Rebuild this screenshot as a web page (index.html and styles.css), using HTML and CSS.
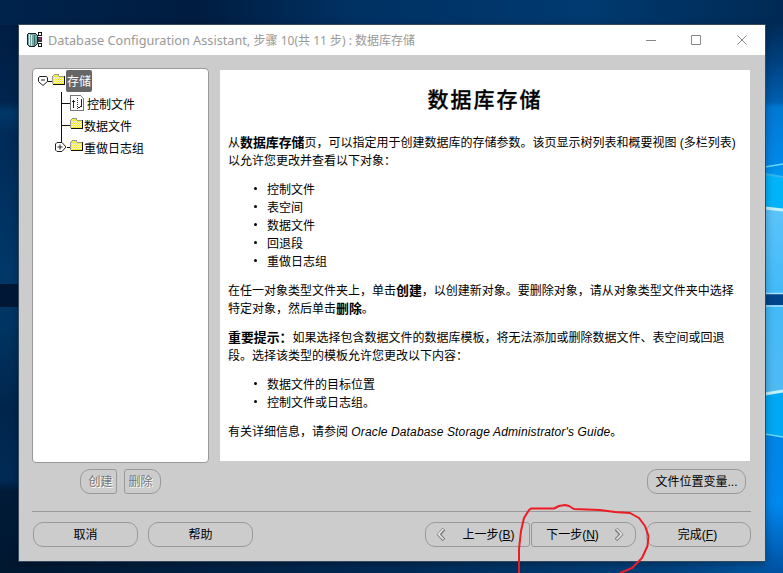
FILE: index.html
```html
<!DOCTYPE html>
<html lang="zh-CN">
<head>
<meta charset="utf-8">
<title>Database Configuration Assistant</title>
<link rel="stylesheet" href="styles.css">
</head>
<body>
<svg class="wallpaper" width="783" height="573" viewBox="0 0 783 573">
  <defs>
    <linearGradient id="top" x1="0" x2="1" y1="0" y2="0"><stop offset="0" stop-color="#00234c"/><stop offset=".25" stop-color="#001c40"/><stop offset=".45" stop-color="#003163"/><stop offset=".75" stop-color="#003a70"/><stop offset=".9" stop-color="#00305f"/><stop offset="1" stop-color="#002a55"/></linearGradient>
    <linearGradient id="left" x1="0" x2="0" y1="0" y2="1"><stop offset="0" stop-color="#001d42"/><stop offset=".14" stop-color="#00254f"/><stop offset=".16" stop-color="#00386a"/><stop offset=".2" stop-color="#002a57"/><stop offset=".45" stop-color="#003869"/><stop offset=".55" stop-color="#003462"/><stop offset=".7" stop-color="#00254c"/><stop offset=".83" stop-color="#002a55"/><stop offset=".85" stop-color="#001b38"/><stop offset="1" stop-color="#001730"/></linearGradient>
    <linearGradient id="right" x1="0" x2="0" y1="0" y2="1"><stop offset="0" stop-color="#002b58"/><stop offset=".06" stop-color="#003f7c"/><stop offset=".14" stop-color="#005fb0"/><stop offset=".15" stop-color="#0078d2"/><stop offset=".25" stop-color="#0088e8"/><stop offset=".27" stop-color="#0096f0"/></linearGradient>
    <linearGradient id="pane" x1="0" x2="0" y1="0" y2="1"><stop offset="0" stop-color="#5cc4fa"/><stop offset=".45" stop-color="#42baf8"/><stop offset="1" stop-color="#50baf4"/></linearGradient>
    <linearGradient id="low" x1="0" x2="0" y1="0" y2="1"><stop offset="0" stop-color="#0084e4"/><stop offset=".5" stop-color="#0088ee"/><stop offset="1" stop-color="#0050a0"/></linearGradient>
    <linearGradient id="bottom" x1="0" x2="1" y1="0" y2="0"><stop offset="0" stop-color="#001730"/><stop offset=".5" stop-color="#002a55"/><stop offset=".85" stop-color="#00427e"/><stop offset="1" stop-color="#0058a6"/></linearGradient>
  </defs>
  <rect width="783" height="26" fill="url(#top)"/>
  <rect y="25" width="19" height="548" fill="url(#left)"/>
  <rect x="765" y="25" width="18" height="548" fill="url(#right)"/>
  <rect y="561" width="783" height="12" fill="url(#bottom)"/>
  <rect y="284" width="19" height="23" fill="#001836"/>
  <path d="M765 174L783 177V210L765 208Z" fill="#00b4fa"/>
  <path d="M765 208L783 210V392L765 394Z" fill="url(#pane)"/>
  <path d="M765 394L783 391V438L765 434Z" fill="#00a8f4"/>
  <path d="M765 434L783 437V573H765Z" fill="url(#low)"/>
  <path d="M765 167L783 164M765 434L783 437" stroke="#6ad8f8" stroke-width="1.500" fill="none"/>
  <path d="M765 174L783 177" stroke="#35b4ee" stroke-width="2"/>
  <path d="M765 208L783 210M765 394L783 391" stroke="#c4f2f8" stroke-width="3"/>
  <rect x="765" y="294" width="18" height="11" fill="#00458a"/>
  <path d="M765 293.500H783M765 306H783" stroke="#a8e2fc" stroke-width="1.500"/>
</svg>
<main class="window">
  <header class="titlebar">
    <svg class="app-icon" width="18" height="18" viewBox="0 0 18 18" shape-rendering="crispEdges">
      <path d="M1 4L3 2H9L11 4V13L9 15H3L1 13Z" fill="#78a8a4" stroke="#222"/>
      <path d="M3.500 3V14M5.500 4V15" stroke="#d5e8e6"/><path d="M8.500 4V15" stroke="#3e6c69"/>
      <path d="M12.500 1.500H15.500V4.500H12.500ZM12.500 12.500H15.500V15.500H12.500Z" fill="#fff" stroke="#111"/>
      <path d="M12 6H16V11H12Z" fill="#333"/><path d="M13 7H15V9H13Z" fill="#a0389a"/>
    </svg>
    <h1 class="title">Database Configuration Assistant, <span class="title-cn">步骤 10(共 11 步) : 数据库存储</span></h1>
    <svg class="controls" width="104" height="14" viewBox="0 0 104 14" fill="none" stroke="#888"><path d="M0 7.500H10M45.500 2.500H54.500V11.500H45.500Z"/><path d="M91.500 2.500L100.500 11.500M100.500 2.500L91.500 11.500"/></svg>
  </header>
  <section class="workspace">
    <nav class="tree">
      <svg class="tree-lines" width="60" height="90" viewBox="0 0 60 90" fill="none" stroke="#111" shape-rendering="crispEdges"><path d="M14 12.500H20M28.500 23V74M29 34.500H37M29 56.500H37M34 78.500H37"/></svg>
      <div class="node root">
        <svg width="10" height="12" viewBox="0 0 10 12" fill="#fff" stroke="#222"><path d="M1.500 1.500H8.500L9.500 3V6.500L5 10.500L.5 6.500V3ZM3 5H7"/></svg>
        <svg class="folder" width="14" height="12"><use href="#folder"/></svg>
        <span class="selected">存储</span>
      </div>
      <div class="node child control">
        <svg width="15" height="16" viewBox="0 0 15 16" shape-rendering="crispEdges" fill="none" stroke="#222"><path d="M.5 .5H10.500L13.500 3.500V15.500H.5Z" fill="#fff" stroke="#777"/><path d="M3.500 5V13M2 6.500H5M11.500 4V11M8 12.500H10M10 11.500H12"/><path d="M7.500 3V14" stroke="#22c" stroke-dasharray="1 1"/></svg>
        <span>控制文件</span>
      </div>
      <div class="node child"><svg class="folder" width="14" height="12"><use href="#folder"/></svg><span>数据文件</span></div>
      <div class="node child redo"><svg class="expander" width="12" height="12" viewBox="0 0 12 12" fill="#fff" stroke="#222"><path d="M2 1.500H7L11 6L7 10.500H2L.5 9V3ZM2.500 6H7.500M5 3.500V8.500"/></svg><svg class="folder" width="14" height="12"><use href="#folder"/></svg><span>重做日志组</span></div>
    </nav>
    <article class="help">
      <h2>数据库存储</h2>
      <p>从<b>数据库存储</b>页，可以指定用于创建数据库的存储参数。该页显示树列表和概要视图 (多栏列表)<br>以允许您更改并查看以下对象：</p>
      <ul><li>控制文件</li><li>表空间</li><li>数据文件</li><li>回退段</li><li>重做日志组</li></ul>
      <p>在任一对象类型文件夹上，单击<b>创建</b>，以创建新对象。要删除对象，请从对象类型文件夹中选择<br>特定对象，然后单击<b>删除</b>。</p>
      <p><b>重要提示：</b>如果选择包含数据文件的数据库模板，将无法添加或删除数据文件、表空间或回退<br>段。选择该类型的模板允许您更改以下内容：</p>
      <ul><li>数据文件的目标位置</li><li>控制文件或日志组。</li></ul>
      <p>有关详细信息，请参阅 <i>Oracle Database Storage Administrator's Guide</i>。</p>
    </article>
  </section>
  <div class="actions">
    <button class="btn small join-left" disabled>创建</button>
    <button class="btn small join-right" disabled>删除</button>
    <button class="btn files">文件位置变量...</button>
  </div>
  <footer class="footer">
    <button class="btn wide">取消</button>
    <button class="btn wide help-btn">帮助</button>
    <button class="btn wide join-left back"><svg width="10" height="13" viewBox="0 0 10 13"><use href="#chevron"/></svg><span>上一步(<u>B</u>)</span></button>
    <button class="btn wide join-right next"><span>下一步(<u>N</u>)</span><svg class="flip" width="10" height="13" viewBox="0 0 10 13"><use href="#chevron"/></svg></button>
    <button class="btn wide finish"><span>完成(<u>F</u>)</span></button>
  </footer>
</main>
<svg class="annotation" width="140" height="73" viewBox="0 0 140 73" fill="none" stroke="#ed1c24" stroke-width="2" stroke-linejoin="round"><path d="M9 73V49L11 31L14 18L19 10L21 8.500H44L49 6L55 5L59 6L64 9L90 10L105 12L120 13L129 18L135 26L138.500 36L137.500 46L132 58L122 68L110 73"/></svg>
<svg class="symbols" width="0" height="0">
  <symbol id="folder" viewBox="0 0 14 12"><g shape-rendering="crispEdges"><path d="M1 2L2 1H6L7 2H12V10H1Z" fill="#f4ee30"/><path d="M2 4.500H12M2 6.500H12M2 8.500H12" stroke="#fffbc0" stroke-dasharray="1 1"/><path d="M3 5.500H12M3 7.500H12" stroke="#fffbc0" stroke-dasharray="1 1"/><path d="M.5 10V2.500L2.500 .5H6L7.500 2.500H12" fill="none" stroke="#999"/><path d="M2 3H7" stroke="#ddd" stroke-width="1"/><path d="M1 10.500H12.500V2" fill="none" stroke="#111"/></g></symbol>
  <symbol id="chevron" viewBox="0 0 10 13"><path d="M8 1L3 6.500L8 12" fill="none" stroke="#777" stroke-width="3.600"/><path d="M7.500 1L2.500 6.300L7.500 11.300" fill="none" stroke="#e4e4e4" stroke-width="1.700"/></symbol>
</svg>
</body>
</html>
```

FILE: styles.css
```css
* { box-sizing: border-box; }
body { margin: 0; width: 783px; height: 573px; overflow: hidden; position: relative; padding: 24px 0 0 18px; background: #002550; color: #000; font: 12px/18px "Liberation Sans", "Noto Sans CJK SC", sans-serif; }
.wallpaper { position: absolute; left: 0; top: 0; z-index: -1; }
.window { width: 748px; height: 538px; border: 1px solid #34495e; background: #ccc; box-shadow: 0 2px 8px rgba(0,0,0,.3); }
.titlebar { height: 30px; background: #fff; display: flex; align-items: center; padding: 0 15px 0 7px; }
.title { margin: 0 auto 0 4px; font: 12.7px/20px "Noto Sans", "Noto Sans CJK SC", sans-serif; color: #999; white-space: nowrap; }
.title-cn { font-size: 12px; }
.workspace { display: flex; padding: 13px 15px 0 13px; height: 408px; }
.tree { position: relative; width: 177px; height: 395px; border: 1px solid #999; border-radius: 4px; background: #fff; padding: 1px 0 0 5px; }
.tree-lines { position: absolute; left: 0; top: 0; }
.node { position: relative; height: 22px; display: flex; align-items: center; white-space: nowrap; }
.node .folder { margin: -3px 1px 0 0; }
.root .folder { margin-left: 4px; margin-right: 0; }
.selected { background: #666; color: #fff; height: 22px; line-height: 24px; padding: 0 1px; border-radius: 2px; }
.child { padding-left: 32px; }
.child span { position: relative; top: 2px; left: -1px; }
.control span { margin-left: 3px; }
.redo { padding-left: 17px; }
.expander { margin-right: 3px; }
.help { width: 530px; height: 391px; margin: 2px 0 0 11px; padding: 16px 8px 0; background: #fff; }
.help h2 { margin: 0 0 20px; font-size: 21px; line-height: 28px; letter-spacing: 2px; text-align: center; font-weight: 500; -webkit-text-stroke: .3px #000; }
.help p { margin: 0 0 11px; white-space: nowrap; }
.help b { font-size: 12.9px; line-height: 1; font-weight: 700; }
.help i { letter-spacing: .14px; }
.help ul { margin: 0 0 11px; padding: 0 0 0 39px; list-style: none; }
.help li { position: relative; }
.help li::before { content: ""; position: absolute; left: -13px; top: 6px; width: 3px; height: 3px; border-radius: 50%; background: #000; }
.actions { display: flex; height: 49px; padding: 6px 5px 0 48px; border-bottom: 1px solid #999; margin: 0 14px 0 13px; }
.btn { height: 25px; border: 1px solid #999; border-radius: 10px; background: #ccc; color: #000; padding: 0; font: inherit; display: flex; align-items: center; justify-content: center; white-space: nowrap; }
.btn:disabled { color: #777; text-shadow: 1px 1px #fff; }
.small { width: 37px; margin-right: 7px; }
.join-left { border-radius: 10px 3px 3px 10px; }
.join-right { border-radius: 3px 10px 10px 3px; }
.small.join-left { padding-left: 4px; }
.small.join-right { padding-right: 4px; }
.files { width: 99px; margin-left: auto; }
.footer { display: flex; padding: 10px 14px 0 14px; }
.wide { width: 105px; }
.help-btn { margin-left: 10px; }
.back { margin-left: auto; gap: 16px; padding-right: 4px; }
.next { margin-left: 1px; gap: 15px; padding-left: 3px; }
.finish { margin-left: 10px; padding-right: 2px; }
.flip { transform: scaleX(-1); }
.annotation { position: absolute; left: 510px; top: 500px; }
.symbols { position: absolute; }
```
